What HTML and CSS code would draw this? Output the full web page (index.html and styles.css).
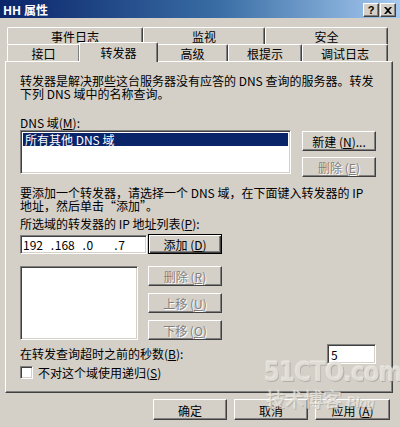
FILE: index.html
```html
<!DOCTYPE html>
<html lang="zh-CN">
<head>
    <meta charset="UTF-8">
    <meta name="viewport" content="width=device-width, initial-scale=1.0">
    <title>HH 属性</title>
    <link rel="stylesheet" href="styles.css">
</head>
<body>
    <div class="window">
        <div class="titlebar">
            <span class="title">HH 属性</span>
            <div class="caption-btns">
                <span class="cap-btn help">?</span>
                <span class="cap-btn">
                    <svg width="8" height="7" viewBox="0 0 8 7">
                        <path d="M0 0h2l2 2 2-2h2L5 3.5 8 7H6L4 5 2 7H0l3-3.5z" fill="#000"/>
                    </svg>
                </span>
            </div>
        </div>

        <div class="tabs">
            <div class="tab-row">
                <div class="tab tab-events">事件日志</div>
                <div class="tab tab-monitor">监视</div>
                <div class="tab tab-security">安全</div>
            </div>
            <div class="tab-row">
                <div class="tab tab-iface">接口</div>
                <div class="tab tab-forward active">转发器</div>
                <div class="tab tab-advanced">高级</div>
                <div class="tab tab-roots">根提示</div>
                <div class="tab tab-debug">调试日志</div>
            </div>
        </div>

        <div class="panel">
            <p class="intro">转发器是解决那些这台服务器没有应答的 DNS 查询的服务器。转发<br>下列 DNS 域中的名称查询。</p>

            <p class="label label-dns">DNS 域(<u>M</u>):</p>
            <div class="row row-dns">
                <div class="listbox list-dns">
                    <div class="list-item selected">所有其他 DNS 域</div>
                </div>
                <div class="btn-col">
                    <button class="btn">新建 (<u>N</u>)...</button>
                    <button class="btn" disabled>删除 (<u>E</u>)</button>
                </div>
            </div>

            <p class="hint">要添加一个转发器，请选择一个 DNS 域，在下面键入转发器的 IP<br>地址，然后单击“添加”。</p>

            <p class="label label-ip">所选域的转发器的 IP 地址列表(<u>P</u>):</p>
            <div class="row row-ip">
                <div class="field ip-field">
                    <span class="octet">192</span><span class="dot">.</span>
                    <span class="octet">168</span><span class="dot">.</span>
                    <span class="octet">0</span><span class="dot">.</span>
                    <span class="octet">7</span>
                </div>
                <button class="btn btn-default">添加 (<u>D</u>)</button>
            </div>

            <div class="row row-servers">
                <div class="listbox list-servers"></div>
                <div class="btn-col btn-col-wide">
                    <button class="btn" disabled>删除 (<u>R</u>)</button>
                    <button class="btn" disabled>上移 (<u>U</u>)</button>
                    <button class="btn" disabled>下移 (<u>O</u>)</button>
                </div>
            </div>

            <div class="row row-timeout">
                <span class="label">在转发查询超时之前的秒数(<u>B</u>):</span>
                <div class="field timeout-field">5</div>
            </div>

            <label class="check-row">
                <span class="checkbox"></span>
                <span>不对这个域使用递归(<u>S</u>)</span>
            </label>
        </div>

        <div class="dialog-buttons">
            <button class="btn">确定</button>
            <button class="btn">取消</button>
            <button class="btn btn-apply">应用 (<u>A</u>)</button>
        </div>

        <div class="watermark">
            <div class="wm-logo">51CTO.com</div>
            <div class="wm-sub">技术博客 <i>Blog</i></div>
        </div>
    </div>
</body>
</html>
```

FILE: styles.css
```css
body {
    margin: 0;
    padding: 0;
    background-color: #d4d0c8;
    font-family: "Noto Sans CJK SC", "Liberation Sans", sans-serif;
    font-size: 12px;
    line-height: 13px;
    color: #000;
}
p {
    margin: 0;
}
u {
    text-decoration: underline;
    text-underline-offset: 1px;
}
.window {
    position: relative;
    width: 400px;
    height: 427px;
    overflow: hidden;
}

/* title bar */
.titlebar {
    height: 18px;
    display: flex;
    align-items: center;
    justify-content: space-between;
    padding: 0 4px 0 3px;
    background: linear-gradient(to right, #0a246a, #3a6ea5 55%, #a6caf0);
}
.title {
    color: #fff;
    font-weight: bold;
    font-size: 12px;
}
.caption-btns {
    display: flex;
    gap: 1px;
    margin-top: 2px;
}
.cap-btn {
    width: 14px;
    height: 12px;
    display: flex;
    align-items: center;
    justify-content: center;
    background-color: #d4d0c8;
    border: 1px solid;
    border-color: #fff #404040 #404040 #fff;
    box-shadow: inset -1px -1px #808080;
    font-family: "Liberation Sans", sans-serif;
    font-weight: bold;
    font-size: 11px;
}

/* tabs */
.tabs {
    margin-top: 9px;
    padding-left: 7px;
}
.tab-row {
    display: flex;
    height: 17px;
}
.tab {
    box-sizing: border-box;
    height: 17px;
    display: flex;
    align-items: center;
    justify-content: center;
    border-top: 1px solid #fff;
    border-left: 1px solid #fff;
    border-right: 1px solid #404040;
    border-radius: 2px 2px 0 0;
    box-shadow: inset -1px 0 #808080;
    background-color: #d4d0c8;
    padding-top: 1px;
}
.tab-events { width: 136px; }
.tab-monitor { width: 122px; }
.tab-security { width: 123px; }
.tab-iface { width: 73px; }
.tab-forward { width: 77px; }
.tab-advanced { width: 71px; }
.tab-roots { width: 74px; }
.tab-debug { width: 86px; }
.tab.active {
    position: relative;
    z-index: 2;
    height: 20px;
    width: 79px;
    margin: -2px -1px -1px -1px;
    padding-bottom: 1px;
}

/* panel */
.panel {
    box-sizing: border-box;
    width: 388px;
    height: 332px;
    margin-left: 5px;
    padding: 12px 16px 0 14px;
    border: 1px solid;
    border-color: #fff #404040 #404040 #fff;
    box-shadow: inset -1px -1px #808080;
    white-space: nowrap;
}
.label-dns {
    margin-top: 16px;
}
.row {
    display: flex;
}
.row-dns {
    margin-top: 1px;
    gap: 11px;
}
.listbox {
    box-sizing: border-box;
    background-color: #fff;
    border: 1px solid;
    border-color: #808080 #fff #fff #808080;
    box-shadow: inset 1px 1px #404040, inset -1px -1px #d4d0c8;
    padding: 2px;
}
.list-dns {
    width: 271px;
    height: 44px;
}
.list-item {
    height: 13px;
    padding-left: 2px;
}
.list-item.selected {
    background-color: #0a246a;
    color: #fff;
}
.btn-col {
    display: flex;
    flex-direction: column;
    gap: 6px;
    margin-top: 1px;
}
.btn {
    box-sizing: border-box;
    width: 74px;
    height: 20px;
    padding: 1px 0 0;
    font-family: inherit;
    font-size: 12px;
    color: #000;
    background-color: #d4d0c8;
    border: 1px solid;
    border-color: #fff #404040 #404040 #fff;
    box-shadow: inset -1px -1px #808080;
    border-radius: 0;
}
.btn:disabled {
    color: #808080;
    text-shadow: 1px 1px #fff;
}
.btn-default {
    border: 1px solid #000;
    box-shadow: inset 1px 1px #fff, inset -1px -1px #404040, inset -2px -2px #808080;
}
.hint {
    margin-top: 9px;
}
.label-ip {
    margin-top: 5px;
}
.row-ip {
    margin-top: 4px;
    gap: 1px;
    align-items: center;
}
.field {
    box-sizing: border-box;
    background-color: #fff;
    border: 1px solid;
    border-color: #808080 #fff #fff #808080;
    box-shadow: inset 1px 1px #404040, inset -1px -1px #d4d0c8;
}
.ip-field {
    width: 127px;
    height: 19px;
    display: flex;
    align-items: center;
    padding-left: 2px;
}
.octet {
    width: 28px;
}
.dot {
    width: 4px;
}
.row-servers {
    margin-top: 12px;
    gap: 10px;
}
.list-servers {
    width: 118px;
    height: 74px;
}
.btn-col-wide {
    gap: 7px;
    margin-top: 0;
}
.row-timeout {
    margin-top: 4px;
    justify-content: space-between;
    align-items: flex-start;
}
.row-timeout .label {
    margin-top: 3px;
}
.timeout-field {
    width: 49px;
    height: 20px;
    display: flex;
    align-items: center;
    padding-left: 3px;
}
.check-row {
    display: flex;
    align-items: center;
    gap: 5px;
    margin-top: 2px;
}
.checkbox {
    box-sizing: border-box;
    width: 13px;
    height: 13px;
    background-color: #fff;
    border: 1px solid;
    border-color: #808080 #fff #fff #808080;
    box-shadow: inset 1px 1px #404040, inset -1px -1px #d4d0c8;
}

/* dialog buttons */
.dialog-buttons {
    display: flex;
    justify-content: flex-end;
    gap: 7px;
    margin-top: 6px;
    padding-right: 10px;
}
.dialog-buttons .btn {
    height: 21px;
}
.btn-apply {
    width: 75px;
}

/* watermark stamped over the corner */
.watermark {
    position: absolute;
    left: 264px;
    top: 356px;
    pointer-events: none;
    color: rgba(235, 232, 226, 0.75);
    text-shadow: 1px 1px rgba(140, 136, 128, 0.45), -1px -1px rgba(255, 255, 255, 0.3);
}
.wm-logo {
    font-family: "DejaVu Sans", sans-serif;
    font-weight: bold;
    font-size: 27px;
    line-height: 32px;
    letter-spacing: -1px;
    transform: scaleX(0.85);
    transform-origin: left;
}
.wm-sub {
    font-size: 19px;
    line-height: 22px;
    margin-left: 2px;
}
.wm-sub i {
    font-family: "Liberation Serif", serif;
    font-size: 15px;
}
```
